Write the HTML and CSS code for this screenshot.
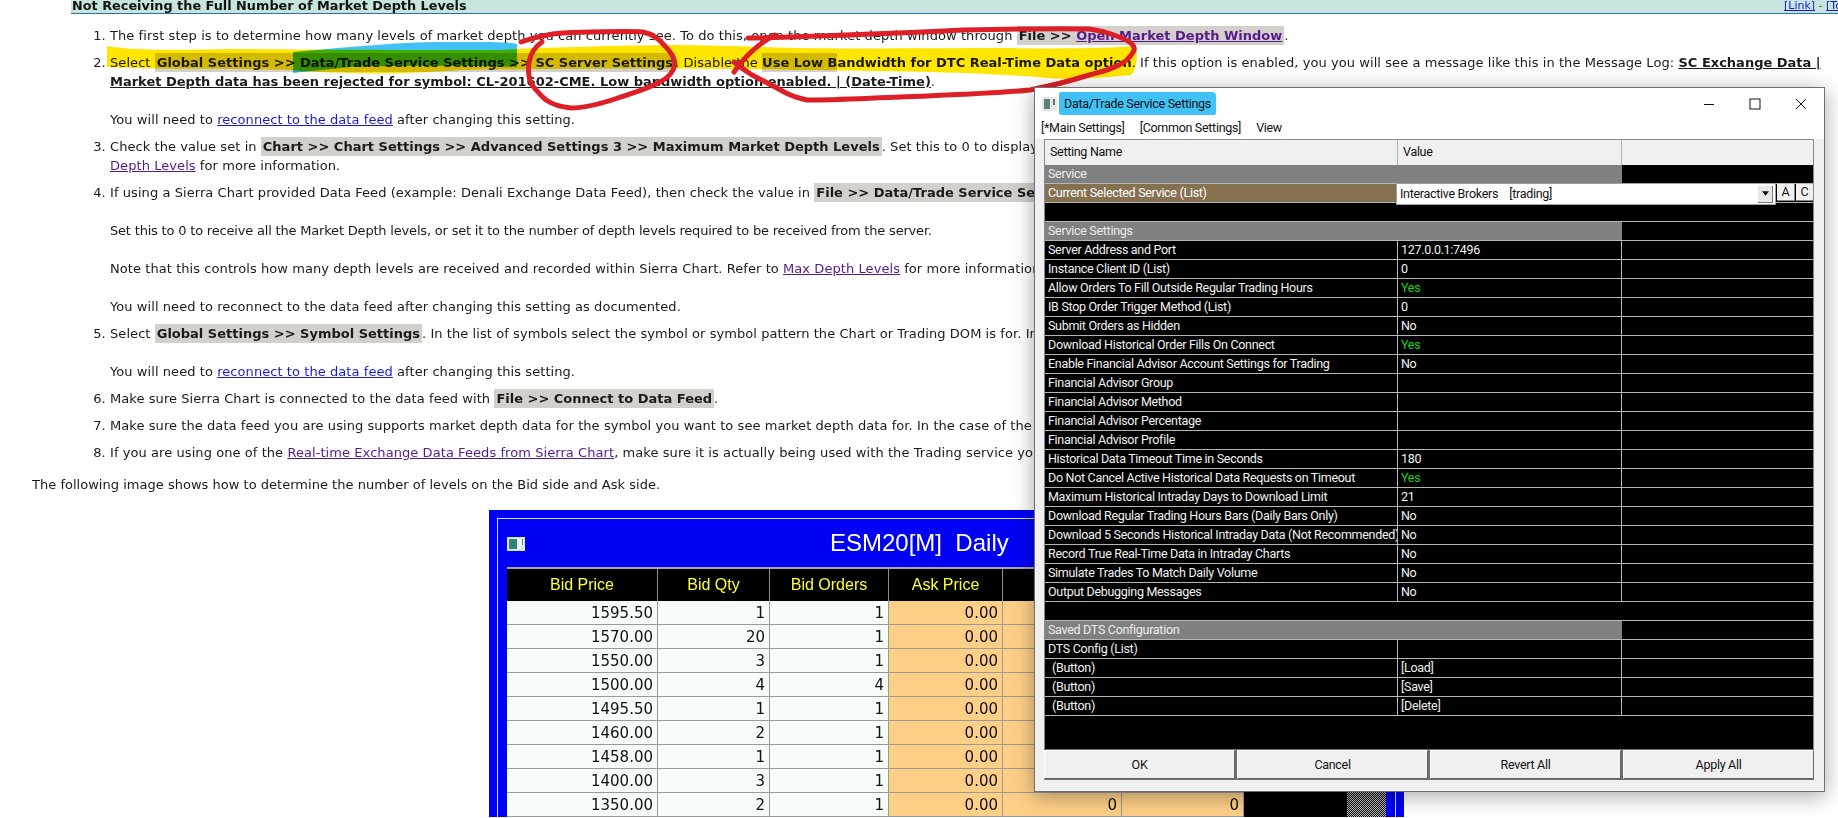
FILE: index.html
```html
<!DOCTYPE html>
<html lang="en">
<head>
<meta charset="utf-8">
<title>Not Receiving the Full Number of Market Depth Levels</title>
<link rel="stylesheet" href="styles.css">
</head>
<body>
<div class="page">
  <header class="section-head">
    <span class="section-title">Not Receiving the Full Number of Market Depth Levels</span>
    <span class="section-links"><a class="link">[Link]</a> - <a class="link">[Top]</a></span>
  </header>

  <ol class="steps">
    <li>The first step is to determine how many levels of market depth you can currently see. To do this, open the market depth window through <span class="menu">File &gt;&gt; <a class="visited">Open Market Depth Window</a></span>.</li>
    <li>Select <span class="menu">Global Settings &gt;&gt; Data/Trade Service Settings &gt;&gt; SC Server Settings</span>. Disable the <b><span class="menu-part">Use Low B</span>andwidth for DTC Real-Time Data option</b>. If this option is enabled, you you will see a message like this in the Message Log: <b class="log">SC Exchange Data |<br>Market Depth data has been rejected for symbol: CL-201602-CME. Low bandwidth option enabled. | (Date-Time)</b>.<br><br>You will need to <a class="link">reconnect to the data feed</a> after changing this setting.</li>
    <li>Check the value set in <span class="menu">Chart &gt;&gt; Chart Settings &gt;&gt; Advanced Settings 3 &gt;&gt; Maximum Market Depth Levels</span>. Set this to 0 to display all the available levels. Refer to Maximum Market<br><a class="visited">Depth Levels</a> for more information.</li>
    <li>If using a Sierra Chart provided Data Feed (example: Denali Exchange Data Feed), then check the value in <span class="menu">File &gt;&gt; Data/Trade Service Settings</span>.<br><br><span class="tight">Set this to 0 to receive all the Market Depth levels, or set it to the number of depth levels required to be received from the server.</span><br><br>Note that this controls how many depth levels are received and recorded within Sierra Chart. Refer to <a class="visited">Max Depth Levels</a> for more information.<br><br>You will need to reconnect to the data feed after changing this setting as documented.</li>
    <li>Select <span class="menu">Global Settings &gt;&gt; Symbol Settings</span>. In the list of symbols select the symbol or symbol pattern the Chart or Trading DOM is for. In the settings enable market depth.<br><br>You will need to <a class="link">reconnect to the data feed</a> after changing this setting.</li>
    <li>Make sure Sierra Chart is connected to the data feed with <span class="menu">File &gt;&gt; Connect to Data Feed</span>.</li>
    <li>Make sure the data feed you are using supports market depth data for the symbol you want to see market depth data for. In the case of the service, check with them.</li>
    <li>If you are using one of the <a class="visited">Real-time Exchange Data Feeds from Sierra Chart</a>, make sure it is actually being used with the Trading service you have selected.</li>
  </ol>

  <p class="lead">The following image shows how to determine the number of levels on the Bid side and Ask side.</p>

  <figure class="dom">
    <div class="dom-inner">
      <div class="dom-title">
        <svg class="dom-icon" viewBox="0 0 18 14" aria-hidden="true"><rect width="18" height="14" fill="#dfe6ee"/><rect x="2" y="2" width="8" height="10" fill="#2f8378"/><rect x="10" y="2" width="4" height="10" fill="#f4f7fa"/><rect x="15" y="2" width="1" height="6" fill="#6a7f90"/></svg>
        <span class="dom-name">ESM20[M]&nbsp; Daily</span>
      </div>
      <div class="dom-table">
        <div class="dh">Bid Price</div><div class="dh">Bid Qty</div><div class="dh">Bid Orders</div><div class="dh">Ask Price</div><div class="dh">Ask Qty</div><div class="dh">Ask Orders</div><div class="dh dh-blank"></div><div class="dh dh-blank"></div>
        <div class="dc">1595.50</div><div class="dc">1</div><div class="dc">1</div><div class="dc ask">0.00</div><div class="dc ask">0</div><div class="dc ask">0</div><div class="dc blk"></div><div class="dc hatch"></div>
        <div class="dc">1570.00</div><div class="dc">20</div><div class="dc">1</div><div class="dc ask">0.00</div><div class="dc ask">0</div><div class="dc ask">0</div><div class="dc blk"></div><div class="dc hatch"></div>
        <div class="dc">1550.00</div><div class="dc">3</div><div class="dc">1</div><div class="dc ask">0.00</div><div class="dc ask">0</div><div class="dc ask">0</div><div class="dc blk"></div><div class="dc hatch"></div>
        <div class="dc">1500.00</div><div class="dc">4</div><div class="dc">4</div><div class="dc ask">0.00</div><div class="dc ask">0</div><div class="dc ask">0</div><div class="dc blk"></div><div class="dc hatch"></div>
        <div class="dc">1495.50</div><div class="dc">1</div><div class="dc">1</div><div class="dc ask">0.00</div><div class="dc ask">0</div><div class="dc ask">0</div><div class="dc blk"></div><div class="dc hatch"></div>
        <div class="dc">1460.00</div><div class="dc">2</div><div class="dc">1</div><div class="dc ask">0.00</div><div class="dc ask">0</div><div class="dc ask">0</div><div class="dc blk"></div><div class="dc hatch"></div>
        <div class="dc">1458.00</div><div class="dc">1</div><div class="dc">1</div><div class="dc ask">0.00</div><div class="dc ask">0</div><div class="dc ask">0</div><div class="dc blk"></div><div class="dc hatch"></div>
        <div class="dc">1400.00</div><div class="dc">3</div><div class="dc">1</div><div class="dc ask">0.00</div><div class="dc ask">0</div><div class="dc ask">0</div><div class="dc blk"></div><div class="dc hatch"></div>
        <div class="dc">1350.00</div><div class="dc">2</div><div class="dc">1</div><div class="dc ask">0.00</div><div class="dc ask">0</div><div class="dc ask">0</div><div class="dc blk"></div><div class="dc hatch"></div>
      </div>
    </div>
  </figure>
</div>

<svg class="ink" viewBox="0 0 1838 818" aria-hidden="true">
  <path class="ink-yellow" d="M107 46C140 52 190 49 250 49C320 50 400 50 500 50C530 48 600 46 668 45C710 45 760 47 795 48C860 49 940 48 1005 48C1060 49 1110 48 1136 46C1138 60 1136 70 1131 75C1100 78 1070 80 1047 78C980 72 900 71 800 70C700 68 600 68 460 70C400 75 340 74 290 70C220 68 160 70 107 67Z"/>
  <path class="ink-blue" d="M293 52C340 48 400 41 460 42C490 42 510 42 517 44L517 67C480 66 420 65 350 67L293 73Z"/>
  <path class="ink-red" d="M521 42C535 37 548 34 563 33C590 32 625 31 643 32C652 34 660 40 664 45C671 52 675 60 675 65C673 73 668 78 660 82C645 90 632 93 618 98C600 104 585 108 571 108C560 107 552 104 546 100C540 95 536 90 532 85C528 78 528 70 529 62C531 52 536 46 542 42"/>
  <path class="ink-red" d="M748 38C800 37 880 34 963 30C1010 29 1060 28 1089 29C1105 31 1122 37 1131 43C1135 47 1135 50 1133 52C1130 58 1125 62 1119 65C1110 70 1100 72 1089 75C1070 81 1050 86 1030 90C990 94 945 95 900 97C870 98 835 100 807 100C798 98 792 96 786 93C773 86 762 80 752 75C746 71 740 67 734 62"/>
  <path class="ink-red" d="M734 72C738 66 743 60 748 55C756 47 765 40 775 35"/>
</svg>

<section class="dialog" aria-label="Data/Trade Service Settings">
  <div class="dlg-title">
    <svg class="dlg-icon" viewBox="0 0 15 14" aria-hidden="true"><rect width="15" height="14" fill="#e3e6ea"/><rect x="2" y="2" width="6" height="10" fill="#5d7f80"/><rect x="11" y="2" width="2" height="6" fill="#64707c"/></svg>
    <span class="dlg-name">Data/Trade Service Settings</span>
    <span class="win-btns">
      <svg class="win-btn" viewBox="0 0 12 12" aria-hidden="true"><path d="M1 6.5H11"/></svg>
      <svg class="win-btn" viewBox="0 0 12 12" aria-hidden="true"><rect x="1" y="1" width="10" height="10"/></svg>
      <svg class="win-btn" viewBox="0 0 12 12" aria-hidden="true"><path d="M1 1L11 11M11 1L1 11"/></svg>
    </span>
  </div>
  <nav class="dlg-menu"><span>[*Main Settings]</span><span>[Common Settings]</span><span>View</span></nav>
  <div class="grid">
    <div class="gr gr-head"><div class="g">Setting Name</div><div class="g">Value</div><div class="g"></div></div>
    <div class="gr sec"><div class="g">Service</div></div>
    <div class="gr cur"><div class="g">Current Selected Service (List)</div>
      <div class="combo"><span class="combo-text">Interactive Brokers &nbsp;&nbsp; [trading]</span><span class="combo-arrow"><svg viewBox="0 0 8 5" aria-hidden="true"><path d="M0 0H8L4 5Z"/></svg></span></div>
      <span class="mini mini-a">A</span><span class="mini mini-c">C</span>
    </div>
    <div class="gr"></div>
    <div class="gr sec"><div class="g">Service Settings</div></div>
    <div class="gr"><div class="g">Server Address and Port</div><div class="g">127.0.0.1:7496</div><div class="g"></div></div>
    <div class="gr"><div class="g">Instance Client ID (List)</div><div class="g">0</div><div class="g"></div></div>
    <div class="gr"><div class="g">Allow Orders To Fill Outside Regular Trading Hours</div><div class="g yes">Yes</div><div class="g"></div></div>
    <div class="gr"><div class="g">IB Stop Order Trigger Method (List)</div><div class="g">0</div><div class="g"></div></div>
    <div class="gr"><div class="g">Submit Orders as Hidden</div><div class="g">No</div><div class="g"></div></div>
    <div class="gr"><div class="g">Download Historical Order Fills On Connect</div><div class="g yes">Yes</div><div class="g"></div></div>
    <div class="gr"><div class="g">Enable Financial Advisor Account Settings for Trading</div><div class="g">No</div><div class="g"></div></div>
    <div class="gr"><div class="g">Financial Advisor Group</div><div class="g"></div><div class="g"></div></div>
    <div class="gr"><div class="g">Financial Advisor Method</div><div class="g"></div><div class="g"></div></div>
    <div class="gr"><div class="g">Financial Advisor Percentage</div><div class="g"></div><div class="g"></div></div>
    <div class="gr"><div class="g">Financial Advisor Profile</div><div class="g"></div><div class="g"></div></div>
    <div class="gr"><div class="g">Historical Data Timeout Time in Seconds</div><div class="g">180</div><div class="g"></div></div>
    <div class="gr"><div class="g">Do Not Cancel Active Historical Data Requests on Timeout</div><div class="g yes">Yes</div><div class="g"></div></div>
    <div class="gr"><div class="g">Maximum Historical Intraday Days to Download Limit</div><div class="g">21</div><div class="g"></div></div>
    <div class="gr"><div class="g">Download Regular Trading Hours Bars (Daily Bars Only)</div><div class="g">No</div><div class="g"></div></div>
    <div class="gr"><div class="g">Download 5 Seconds Historical Intraday Data (Not Recommended)</div><div class="g">No</div><div class="g"></div></div>
    <div class="gr"><div class="g">Record True Real-Time Data in Intraday Charts</div><div class="g">No</div><div class="g"></div></div>
    <div class="gr"><div class="g">Simulate Trades To Match Daily Volume</div><div class="g">No</div><div class="g"></div></div>
    <div class="gr"><div class="g">Output Debugging Messages</div><div class="g">No</div><div class="g"></div></div>
    <div class="gr"></div>
    <div class="gr sec"><div class="g">Saved DTS Configuration</div></div>
    <div class="gr"><div class="g">DTS Config (List)</div><div class="g"></div><div class="g"></div></div>
    <div class="gr"><div class="g indent">(Button)</div><div class="g">[Load]</div><div class="g"></div></div>
    <div class="gr"><div class="g indent">(Button)</div><div class="g">[Save]</div><div class="g"></div></div>
    <div class="gr"><div class="g indent">(Button)</div><div class="g">[Delete]</div><div class="g"></div></div>
  </div>
  <div class="dlg-actions"><button class="act">OK</button><button class="act">Cancel</button><button class="act">Revert All</button><button class="act">Apply All</button></div>
</section>
</body>
</html>
```

FILE: styles.css
```css
* { box-sizing: border-box; }
html, body { margin: 0; height: 818px; overflow: hidden; background: #fff; }
body { position: relative; width: 1838px; font-family: "DejaVu Sans", sans-serif; color: #1a1a1a; }
.page { font-size: 13px; line-height: 19px; letter-spacing: .07px; }

.section-head { display: flex; justify-content: space-between; height: 14px; margin-left: 71px; background: #c8e4e0; border-bottom: 1px solid #336e99; overflow: hidden; line-height: 12px; white-space: nowrap; letter-spacing: 0; }
.section-title { font-weight: 700; font-size: 12.85px; color: #111; padding-left: 1px; }
.section-links { font-size: 11px; color: #555; width: 54px; overflow: hidden; }

a { text-decoration: underline; }
.link { color: #1a1ad0; }
.visited { color: #551a8b; }

.steps { margin: 12px 0 0; padding: 0 0 0 110px; white-space: nowrap; }
.steps li { margin-bottom: 8px; }
.steps b { letter-spacing: 0; }
.menu { background: #d3cfcb; font-weight: 700; padding: 2px; letter-spacing: 0; }
.menu-part { background: #d3cfcb; padding: 2px 0; }
.log { text-decoration: underline; }
.tight { letter-spacing: -.19px; }

.lead { margin: 13px 0 0 32px; white-space: nowrap; letter-spacing: .02px; }

.dom { margin: 16px 0 0 489px; width: 915px; height: 307px; padding: 8px 8px 0; background: #0000f5; overflow: hidden; letter-spacing: 0; }
.dom-inner { height: 100%; border: solid #cfe0f0; border-width: 1px 1px 0; padding: 0 9px; }
.dom-title { display: flex; align-items: center; height: 48px; }
.dom-icon { width: 18px; height: 14px; margin-top: 2px; }
.dom-name { margin-left: 305px; font-family: "Liberation Sans", sans-serif; font-size: 24px; color: #fff; line-height: 30px; white-space: nowrap; }
.dom-table { display: grid; grid-template-columns: 151px 112px 119px 114px 119px 122px 103px 39px; grid-template-rows: 32px; grid-auto-rows: 24px; border-top: 2px solid #a8a8a8; }
.dh { background: #000; color: #ffff33; font-family: "Liberation Sans", sans-serif; font-size: 16px; line-height: 31px; text-align: center; border-right: 1px solid #8e8e8e; }
.dh-blank { border: 0; }
.dc { background: #f6fdf8; color: #111; font-size: 15px; line-height: 24px; text-align: right; padding-right: 4px; border-right: 1px solid #9a9a9a; border-bottom: 1px solid #9a9a9a; }
.ask { background: #fecf87; }
.blk { background: #000; border: 0; }
.hatch { background: repeating-conic-gradient(#111 0 25%, #bbb 0 50%) 0 0 / 2px 2px; border: 0; }

.ink { position: absolute; left: 0; top: 0; width: 1838px; height: 818px; pointer-events: none; }
.ink-yellow { fill: #ffe600; mix-blend-mode: multiply; }
.ink-blue { fill: #41c2f6; mix-blend-mode: multiply; }
.ink-red { fill: none; stroke: #dd2027; stroke-width: 5; stroke-linecap: round; stroke-linejoin: round; }

.dialog { position: absolute; left: 1034px; top: 87px; width: 791px; height: 705px; display: flex; flex-direction: column; padding: 0 10px; background: #f0f0f0; border: 1px solid #707070; box-shadow: 0 4px 20px rgba(0,0,0,.35); font-family: "Roboto", "Liberation Sans", sans-serif; font-size: 12.5px; letter-spacing: -.3px; color: #111; }
.dlg-title { display: flex; align-items: center; height: 31px; margin: 0 -10px; padding: 0 6px 0 7px; background: #fff; }
.dlg-icon { width: 15px; height: 14px; }
.dlg-name { margin-left: 2px; padding: 4px 5px; height: 23px; line-height: 15px; background: #41c2f6; border-radius: 2px 4px 2px 3px; }
.win-btns { display: flex; margin-left: auto; gap: 34px; padding-right: 11px; }
.win-btn { width: 12px; height: 12px; fill: none; stroke: #111; stroke-width: 1; }
.dlg-menu { display: flex; gap: 15px; height: 20px; margin: 0 -10px; padding: 0 6px; background: #fff; line-height: 18px; }
.grid { flex: 1; background: #000; color: #f2f2f2; border: 1px solid #8a8a8a; border-bottom: 0; margin-left: -1px; }
.gr { display: grid; grid-template-columns: 353px 224px 1fr; height: 19px; line-height: 18px; white-space: nowrap; border-bottom: 1px solid #b5b5b5; }
.g { padding-left: 3px; border-right: 1px solid #b5b5b5; overflow: hidden; }
.g:nth-child(3) { border-right: 0; }
.indent { padding-left: 7px; }
.yes { color: #19d419; }
.gr-head { height: 25px; background: #f0f0f0; color: #111; border-bottom: 0; }
.gr-head .g { line-height: 24px; padding-left: 5px; }
.sec { grid-template-columns: 577px 1fr; }
.sec .g { background: #808080; color: #eee; border: 0; }
.cur { position: relative; }
.cur .g:first-child { background: #85704f; color: #fff; border-right: 0; }
.combo { position: absolute; left: 351px; top: -1px; width: 380px; height: 22px; display: flex; align-items: center; justify-content: space-between; padding: 0 2px 0 3px; background: #fff; color: #111; border: 1px solid #a0a0a0; }
.combo-arrow { display: flex; align-items: center; justify-content: center; width: 15px; height: 17px; background: #e8e8e8; border-right: 1px solid #777; border-bottom: 1px solid #777; }
.combo-arrow svg { width: 7px; height: 5px; fill: #111; }
.mini { position: absolute; top: 0; width: 18px; height: 17px; background: #f0f0f0; color: #111; text-align: center; line-height: 16px; border-right: 1px solid #888; border-bottom: 1px solid #888; }
.mini-a { left: 732px; }
.mini-c { left: 751px; }
.dlg-actions { display: grid; grid-template-columns: repeat(4, 1fr); gap: 2px; height: 31px; margin: 0 0 11px -1px; padding: 1px 0 1px; background: #6e6e6e; }
.act { font: inherit; letter-spacing: inherit; color: #111; background: #f0f0f0; border: 1px solid #fff; border-right-color: #666; border-bottom-color: #666; padding: 0; }
```
